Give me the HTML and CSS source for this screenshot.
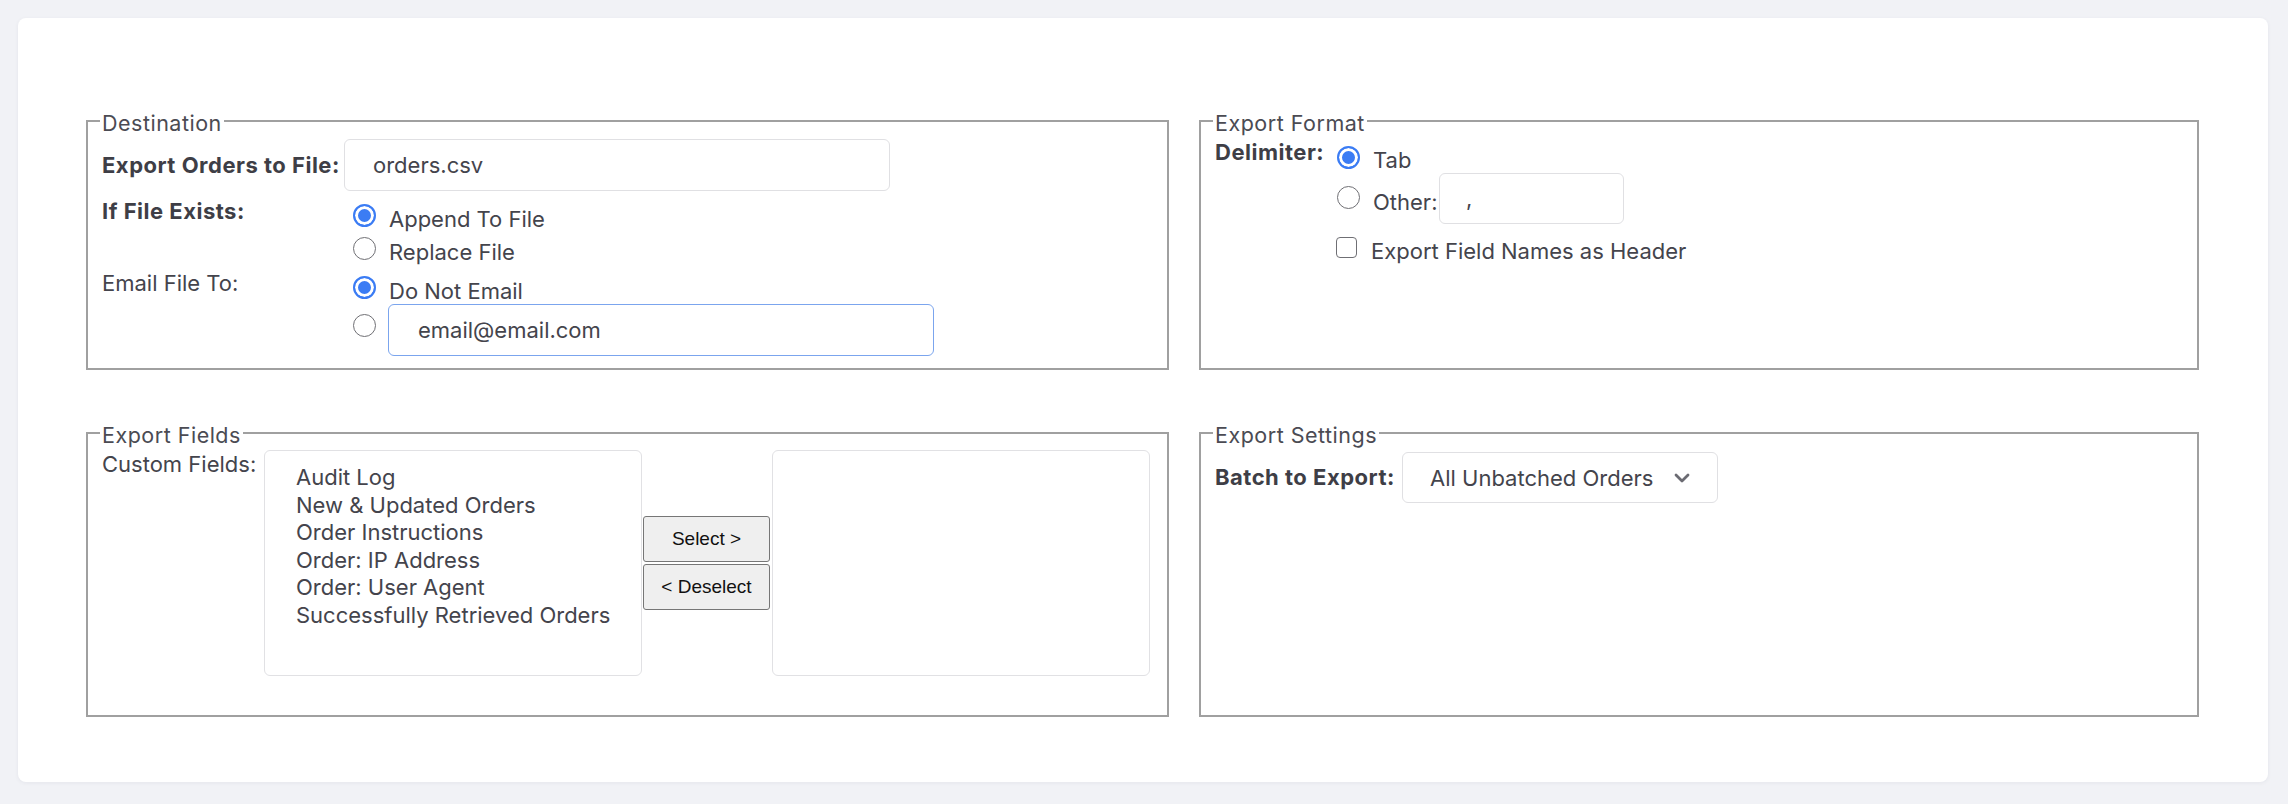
FILE: index.html
```html
<!DOCTYPE html>
<html lang="en">
<head>
<meta charset="utf-8">
<title>Export Orders</title>
<link rel="stylesheet" href="styles.css">
</head>
<body>
<div class="card">
  <div class="panels">

    <fieldset class="panel">
      <legend>Destination</legend>
      <div class="form form-dest">
        <label class="lbl bold lbl-mid" for="file-name">Export Orders to File:</label>
        <div class="ctl"><input id="file-name" class="text-input file-input" type="text" value="orders.csv"></div>

        <div class="lbl bold row-gap">If File Exists:</div>
        <div class="ctl options row-gap">
          <label class="opt"><input type="radio" class="radio" name="exists" checked>Append To File</label>
          <label class="opt"><input type="radio" class="radio" name="exists">Replace File</label>
        </div>

        <div class="lbl row-gap-sm">Email File To:</div>
        <div class="ctl options row-gap-sm">
          <label class="opt"><input type="radio" class="radio" name="email" checked>Do Not Email</label>
          <div class="opt opt-field">
            <input type="radio" class="radio radio-field" name="email">
            <input class="text-input email-input" type="text" value="email@email.com">
          </div>
        </div>
      </div>
    </fieldset>

    <fieldset class="panel">
      <legend>Export Format</legend>
      <div class="form form-format">
        <div class="lbl bold">Delimiter:</div>
        <div class="ctl options options-format">
          <label class="opt opt-format"><input type="radio" class="radio" name="delim" checked>Tab</label>
          <div class="opt opt-other">
            <input type="radio" class="radio radio-other" name="delim">
            <span class="other-text">Other:</span>
            <input class="text-input delim-input" type="text" value=",">
          </div>
          <label class="opt opt-check"><input type="checkbox" class="check">Export Field Names as Header</label>
        </div>
      </div>
    </fieldset>

    <fieldset class="panel">
      <legend>Export Fields</legend>
      <div class="form form-fields">
        <div class="lbl">Custom Fields:</div>
        <div class="ctl picker">
          <ul class="listbox">
            <li>Audit Log</li>
            <li>New &amp; Updated Orders</li>
            <li>Order Instructions</li>
            <li>Order: IP Address</li>
            <li>Order: User Agent</li>
            <li>Successfully Retrieved Orders</li>
          </ul>
          <div class="picker-buttons">
            <button class="btn" type="button">Select &gt;</button>
            <button class="btn" type="button">&lt; Deselect</button>
          </div>
          <ul class="listbox listbox-selected"></ul>
        </div>
      </div>
    </fieldset>

    <fieldset class="panel">
      <legend>Export Settings</legend>
      <div class="form form-settings">
        <div class="lbl bold lbl-mid">Batch to Export:</div>
        <div class="ctl">
          <div class="select">
            <span>All Unbatched Orders</span>
            <svg class="chevron" width="16" height="10" viewBox="0 0 16 10" aria-hidden="true">
              <path d="M2 2 L8 8 L14 2" fill="none" stroke="#6b6b72" stroke-width="2.8" stroke-linecap="round" stroke-linejoin="round"/>
            </svg>
          </div>
        </div>
      </div>
    </fieldset>

  </div>
</div>
</body>
</html>
```

FILE: styles.css
```css
* {
  box-sizing: border-box;
}

html,
body {
  margin: 0;
}

body {
  background: #f1f2f6;
  font-family: Inter, "Liberation Sans", sans-serif;
  font-size: 22px;
  color: #44444c;
}

.card {
  margin: 18px 20px 22px 18px;
  height: 764px;
  background: #ffffff;
  border-radius: 8px;
  padding: 90px 69px 65px 68px;
  box-shadow: 0 1px 4px rgba(30, 40, 70, 0.06);
}

.panels {
  display: grid;
  grid-template-columns: 1083px 1000px;
  grid-template-rows: 262px 297px;
  column-gap: 30px;
  row-gap: 50px;
}

.panel {
  margin: 0;
  min-width: 0;
  border: 2px solid #a0a0a0;
  padding: 5px 14px 0 14px;
}

.panel legend {
  margin-left: -2px;
  padding: 4px 2px 0 2px;
  font-size: 21.5px;
  line-height: 22px;
  letter-spacing: 0.5px;
  color: #4b4b53;
}

/* label / control grid inside each panel */
.form {
  display: grid;
  align-items: start;
}

.form-dest {
  grid-template-columns: 242px 1fr;
}

.form-format {
  grid-template-columns: 113px 1fr;
}

.form-fields {
  grid-template-columns: 162px 1fr;
}

.form-settings {
  grid-template-columns: 187px 1fr;
}

.lbl {
  line-height: 27px;
  white-space: nowrap;
}

.lbl-mid {
  align-self: center;
}

.bold {
  font-weight: 700;
  letter-spacing: 0.5px;
  color: #3e3e46;
}

.row-gap {
  margin-top: 7px;
}

.row-gap-sm {
  margin-top: 1px;
}

.options {
  display: flex;
  flex-direction: column;
}

.options.row-gap {
  margin-top: 12px;
}

.options.row-gap-sm {
  margin-top: 6px;
}

.opt {
  display: flex;
  align-items: flex-start;
  line-height: 33px;
  white-space: nowrap;
}

/* radios and checkbox */
.radio {
  appearance: none;
  -webkit-appearance: none;
  flex: none;
  width: 23px;
  height: 23px;
  margin: 1px 13px 0 9px;
  border: 1.7px solid #6f6f74;
  border-radius: 50%;
  background: #ffffff;
}

.radio:checked {
  border: 2px solid #3b7cf4;
  background: #3b7cf4;
  box-shadow: inset 0 0 0 3px #ffffff;
}

.check {
  appearance: none;
  -webkit-appearance: none;
  flex: none;
  width: 21px;
  height: 21px;
  margin: 2px 14px 0 8px;
  border: 1.7px solid #6f6f74;
  border-radius: 4px;
  background: #ffffff;
}

.text-input {
  font: inherit;
  color: #44444c;
  border: 1px solid #e0e0e3;
  border-radius: 6px;
  background: #ffffff;
  outline: none;
}

.file-input {
  width: 546px;
  height: 52px;
  padding: 0 0 0 28px;
}

.opt-field {
  margin-top: -4.5px;
}

.radio-field {
  margin-top: 10.5px;
}

.email-input {
  width: 546px;
  height: 52px;
  margin-left: -1px;
  padding: 0 0 0 29px;
  border-color: #7ba5ee;
}

/* Export Format */
.options-format {
  margin-top: 5px;
}

.opt-format .radio {
  margin-top: 1.5px;
}

.opt-other {
  margin-top: -4.5px;
}

.radio-other {
  margin-top: 13.5px;
}

.other-text {
  width: 65px;
  margin-top: 13.5px;
}

.delim-input {
  width: 185px;
  height: 51px;
  margin-left: 1px;
  padding: 0 0 0 26px;
}

.opt-check {
  margin-top: 11.5px;
}

/* Export Fields picker */
.picker {
  display: flex;
  align-items: center;
  margin-top: -1px;
}

.listbox {
  list-style: none;
  margin: 0;
  width: 378px;
  height: 226px;
  padding: 13px 0 0 31px;
  border: 1px solid #e1e1e4;
  border-radius: 6px;
  line-height: 27.6px;
  color: #44444c;
}

.listbox-selected {
  margin-left: 2px;
}

.picker-buttons {
  display: flex;
  flex-direction: column;
  gap: 2px;
  margin-left: 1px;
}

.btn {
  width: 127px;
  height: 46px;
  padding: 0;
  font-family: "Liberation Sans", Arial, sans-serif;
  font-size: 19px;
  color: #111111;
  background: #efefef;
  border: 1px solid #767676;
  border-radius: 3px;
}

/* Export Settings */
.select {
  display: flex;
  align-items: center;
  justify-content: space-between;
  width: 316px;
  height: 51px;
  margin-top: 1px;
  padding: 0 27px 0 27px;
  border: 1px solid #e0e0e3;
  border-radius: 6px;
  color: #44444c;
}

.chevron {
  display: block;
}
```
